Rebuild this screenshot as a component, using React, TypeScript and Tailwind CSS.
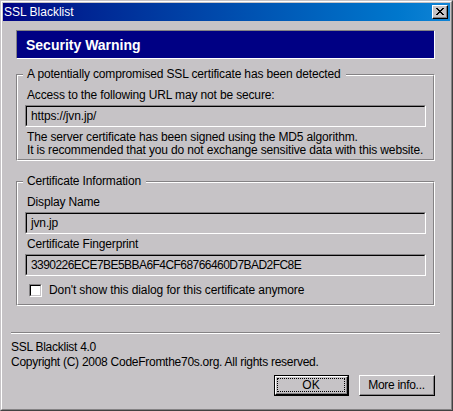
import React from "react";

const font = { fontFamily: '"Liberation Sans", Arial, sans-serif' };

function CloseGlyph() {
  const rows = [
    "XX....XX",
    ".XX..XX.",
    "..XXXX..",
    "...XX...",
    "..XXXX..",
    ".XX..XX.",
    "XX....XX",
  ];
  const rects: React.ReactNode[] = [];
  rows.forEach((r, y) =>
    r.split("").forEach((c, x) => {
      if (c === "X") rects.push(<rect key={`${x}-${y}`} x={x} y={y} width={1} height={1} fill="#000" />);
    })
  );
  return (
    <svg width="8" height="7" viewBox="0 0 8 7" shapeRendering="crispEdges">
      {rects}
    </svg>
  );
}

function Sunken({ children, className = "" }: { children?: React.ReactNode; className?: string }) {
  return (
    <div className={`border border-t-[#848284] border-l-[#848284] border-r-white border-b-white ${className}`}>
      <div className="h-full w-full border border-t-black border-l-black border-r-[#c6c3c6] border-b-[#c6c3c6]">
        {children}
      </div>
    </div>
  );
}

function TextBox({ value, tight }: { value: string; tight?: boolean }) {
  return (
    <Sunken className="h-[22px] w-[401px]">
      <div
        className={`flex h-full items-center pl-[4px] text-[12px] leading-[14px] text-black ${tight ? "tracking-[-0.55px]" : "tracking-[-0.15px]"}`}
      >
        {value}
      </div>
    </Sunken>
  );
}

function GroupBox({
  title,
  height,
  children,
  className = "",
}: {
  title: string;
  height: string;
  children: React.ReactNode;
  className?: string;
}) {
  return (
    <div
      className={`relative w-[419px] border border-t-[#848284] border-l-[#848284] border-r-white border-b-white ${height} ${className}`}
    >
      <div className="h-full w-full border border-t-white border-l-white border-r-[#848284] border-b-[#848284] px-[7px] pt-[12px]">
        {children}
      </div>
      <div className="absolute -top-[8px] left-[6px] bg-[#c6c3c6] pl-[4px] pr-[5px] text-[12px] leading-[14px] tracking-[-0.15px] text-black">
        {title}
      </div>
    </div>
  );
}

function Button({ label, isDefault, width }: { label: string; isDefault?: boolean; width: string }) {
  if (isDefault) {
    return (
      <div className={`h-[21px] ${width} border border-black`}>
        <div className="h-full w-full border border-t-white border-l-white border-r-black border-b-black">
          <div className="h-full w-full border-r border-b border-r-[#848284] border-b-[#848284] p-[1px]">
            <div className="flex h-full w-full items-center justify-center border border-dotted border-black text-[12px] leading-[14px] text-black">
              {label}
            </div>
          </div>
        </div>
      </div>
    );
  }
  return (
    <div className={`h-[21px] ${width} border border-t-white border-l-white border-r-black border-b-black`}>
      <div className="flex h-full w-full items-center justify-center border-r border-b border-r-[#848284] border-b-[#848284] text-[12px] leading-[14px] tracking-[-0.3px] text-black">
        {label}
      </div>
    </div>
  );
}

export default function App() {
  return (
    <div style={font} className="h-[411px] w-[453px] overflow-hidden bg-[#c6c3c6]">
      <div className="h-full w-full border border-t-[#c6c3c6] border-l-[#c6c3c6] border-r-[#424142] border-b-[#424142]">
        <div className="flex h-full w-full flex-col border border-t-white border-l-white border-r-[#848284] border-b-[#848284] p-[1px]">
          {/* Title bar */}
          <div className="flex h-[18px] items-center bg-linear-to-r from-[#000084] to-[#1084d6]">
            <span className="pl-[1px] text-[12px] leading-[14px] text-white">SSL Blacklist</span>
            <div className="ml-auto mr-[2px] h-[14px] w-[16px] border border-t-white border-l-white border-r-black border-b-black bg-[#c6c3c6]">
              <div className="flex h-full w-full items-center justify-center border-r border-b border-r-[#848284] border-b-[#848284]">
                <CloseGlyph />
              </div>
            </div>
          </div>

          {/* Banner */}
          <div className="ml-[13px] mt-[9px] flex h-[29px] w-[419px] items-center border border-t-[#848284] border-l-[#848284] border-r-white border-b-white bg-[#000084] pl-[9px]">
            <span className="text-[14px] font-bold leading-[16px] text-white">Security Warning</span>
          </div>

          {/* Group 1 */}
          <GroupBox
            title="A potentially compromised SSL certificate has been detected"
            height="h-[87px]"
            className="ml-[13px] mt-[15px]"
          >
            <div className="pl-[2px] text-[12px] leading-[14px] tracking-[-0.15px] text-black">
              Access to the following URL may not be secure:
            </div>
            <div className="mt-[3px]">
              <TextBox value="https://jvn.jp/" />
            </div>
            <div className="mt-[4px] pl-[2px] text-[12px] leading-[13px] tracking-[-0.15px] text-black">
              <div>The server certificate has been signed using the MD5 algorithm.</div>
              <div>It is recommended that you do not exchange sensitive data with this website.</div>
            </div>
          </GroupBox>

          {/* Group 2 */}
          <GroupBox title="Certificate Information" height="h-[125px]" className="ml-[13px] mt-[20px]">
            <div className="pl-[2px] text-[12px] leading-[14px] tracking-[-0.15px] text-black">Display Name</div>
            <div className="mt-[3px]">
              <TextBox value="jvn.jp" />
            </div>
            <div className="mt-[3px] pl-[2px] text-[12px] leading-[14px] tracking-[-0.15px] text-black">
              Certificate Fingerprint
            </div>
            <div className="mt-[3px]">
              <TextBox value="3390226ECE7BE5BBA6F4CF68766460D7BAD2FC8E" tight />
            </div>
            <div className="mt-[7px] flex h-[14px] items-center pl-[4px]">
              <Sunken className="h-[13px] w-[13px]">
                <div className="h-full w-full bg-white" />
              </Sunken>
              <span className="ml-[7px] text-[12px] leading-[14px] tracking-[-0.1px] text-black">
                Don't show this dialog for this certificate anymore
              </span>
            </div>
          </GroupBox>

          {/* Separator */}
          <div className="ml-[8px] mt-[26px] w-[429px] border-t border-b border-t-[#848284] border-b-white" />

          {/* Footer */}
          <div className="ml-[8px] mt-[6px] text-[12px] leading-[15px] tracking-[-0.27px] text-black">
            <div>SSL Blacklist 4.0</div>
            <div>Copyright (C) 2008 CodeFromthe70s.org. All rights reserved.</div>
          </div>

          <div className="mr-[15px] mt-[5px] flex justify-end gap-[10px]">
            <Button label="OK" isDefault width="w-[75px]" />
            <Button label="More info..." width="w-[76px]" />
          </div>
        </div>
      </div>
    </div>
  );
}
